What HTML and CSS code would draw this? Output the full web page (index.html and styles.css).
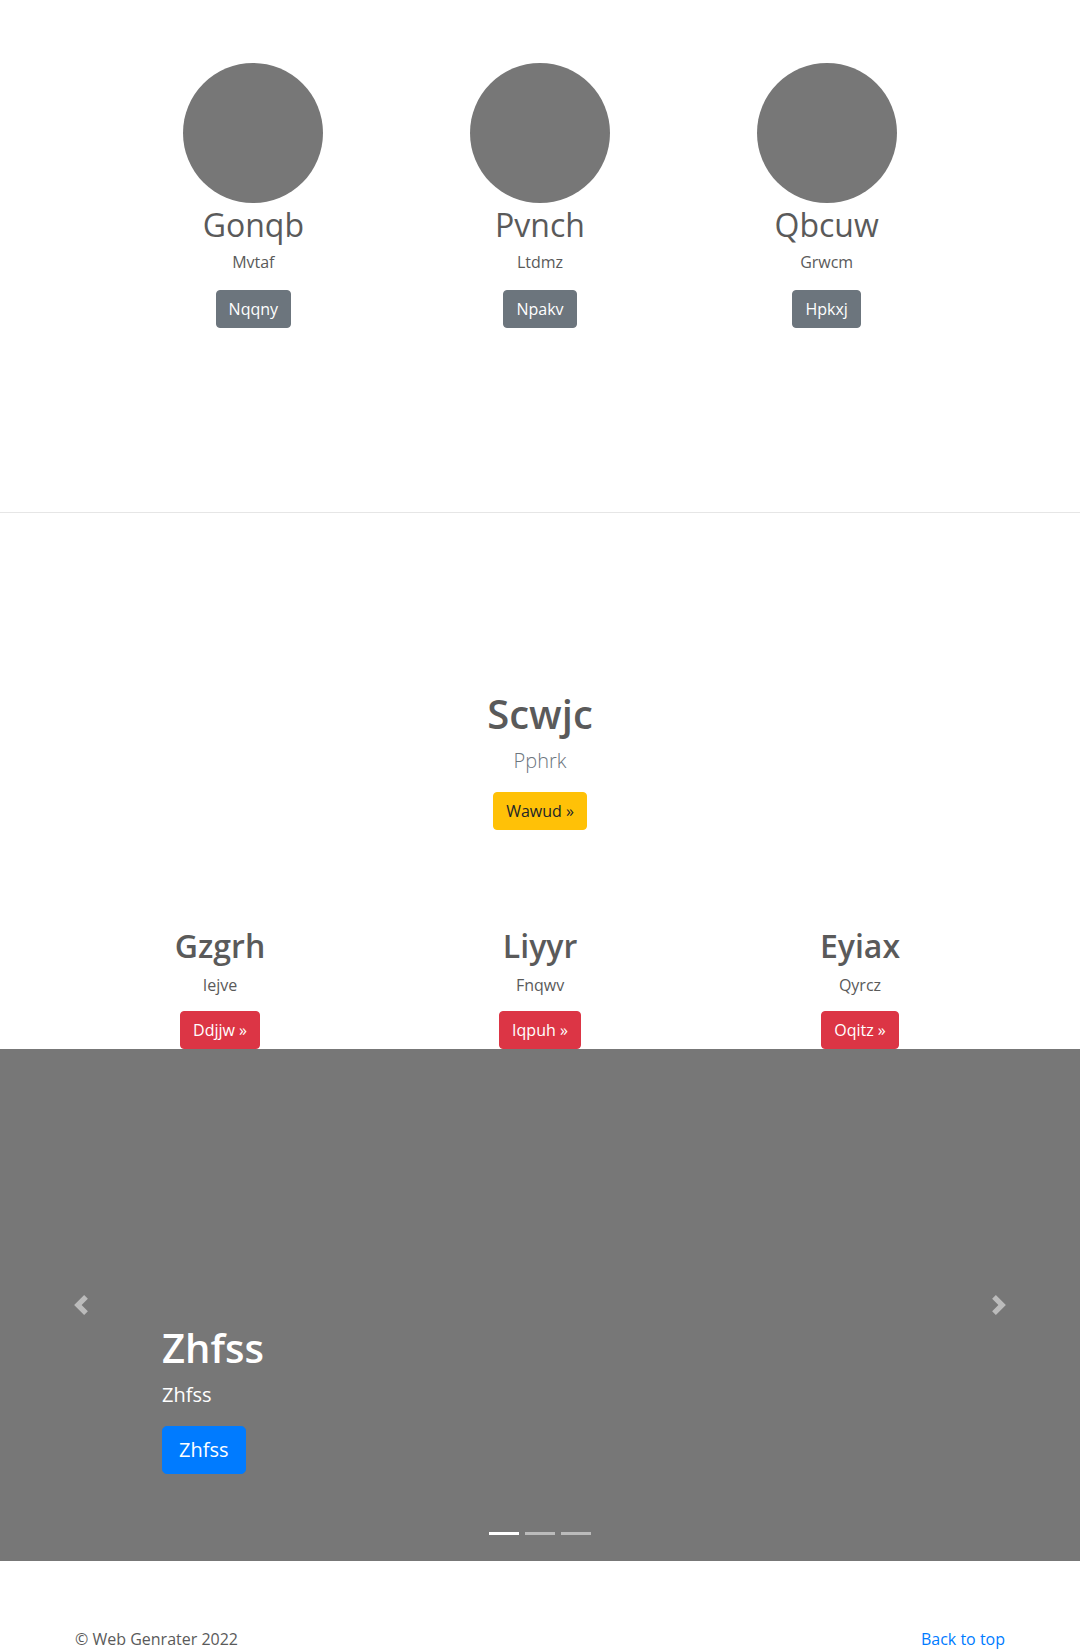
FILE: index.html
```html
<!DOCTYPE html>
<html lang="en">
<head>
<meta charset="utf-8">
<title>Web Genrater</title>
<link rel="stylesheet" href="styles.css">
</head>
<body>
<main>
  <section class="team">
    <div class="team-row">
      <div class="member">
        <svg class="avatar" width="140" height="140" viewBox="0 0 140 140" aria-hidden="true"><circle cx="70" cy="70" r="70" fill="#777"/></svg>
        <h2 class="member-name">Gonqb</h2>
        <p class="member-role">Mvtaf</p>
        <a class="btn btn-secondary" href="#">Nqqny</a>
      </div>
      <div class="member">
        <svg class="avatar" width="140" height="140" viewBox="0 0 140 140" aria-hidden="true"><circle cx="70" cy="70" r="70" fill="#777"/></svg>
        <h2 class="member-name">Pvnch</h2>
        <p class="member-role">Ltdmz</p>
        <a class="btn btn-secondary" href="#">Npakv</a>
      </div>
      <div class="member">
        <svg class="avatar" width="140" height="140" viewBox="0 0 140 140" aria-hidden="true"><circle cx="70" cy="70" r="70" fill="#777"/></svg>
        <h2 class="member-name">Qbcuw</h2>
        <p class="member-role">Grwcm</p>
        <a class="btn btn-secondary" href="#">Hpkxj</a>
      </div>
    </div>
  </section>

  <section class="features">
    <div class="feature-main">
      <h1 class="feature-title">Scwjc</h1>
      <p class="feature-lead">Pphrk</p>
      <a class="btn btn-warning" href="#">Wawud &raquo;</a>
    </div>
    <div class="feature-row">
      <div class="feature">
        <h2 class="feature-name">Gzgrh</h2>
        <p class="feature-text">Iejve</p>
        <a class="btn btn-danger" href="#">Ddjjw &raquo;</a>
      </div>
      <div class="feature">
        <h2 class="feature-name">Liyyr</h2>
        <p class="feature-text">Fnqwv</p>
        <a class="btn btn-danger" href="#">Iqpuh &raquo;</a>
      </div>
      <div class="feature">
        <h2 class="feature-name">Eyiax</h2>
        <p class="feature-text">Qyrcz</p>
        <a class="btn btn-danger" href="#">Oqitz &raquo;</a>
      </div>
    </div>
  </section>

  <section class="carousel">
    <a class="carousel-control control-prev" href="#" aria-label="Previous">
      <svg width="20" height="20" viewBox="0 0 8 8" aria-hidden="true"><path fill="#fff" d="M5.25 0l-4 4 4 4 1.5-1.5-2.5-2.5 2.5-2.5-1.5-1.5z"/></svg>
    </a>
    <div class="carousel-caption">
      <h1 class="caption-title">Zhfss</h1>
      <p class="caption-text">Zhfss</p>
      <a class="btn btn-primary btn-lg" href="#">Zhfss</a>
    </div>
    <a class="carousel-control control-next" href="#" aria-label="Next">
      <svg width="20" height="20" viewBox="0 0 8 8" aria-hidden="true"><path fill="#fff" d="M2.75 0l-1.5 1.5 2.5 2.5-2.5 2.5 1.5 1.5 4-4-4-4z"/></svg>
    </a>
    <ol class="carousel-indicators">
      <li class="active"></li>
      <li></li>
      <li></li>
    </ol>
  </section>
</main>

<footer class="footer">
  <p class="copyright">&copy; Web Genrater 2022</p>
  <p class="back-top"><a href="#">Back to top</a></p>
</footer>
</body>
</html>
```

FILE: styles.css
```css
* {
  box-sizing: border-box;
}

html, body {
  margin: 0;
  padding: 0;
}

body {
  font-family: "Open Sans", "Noto Sans", "Liberation Sans", sans-serif;
  font-size: 16px;
  line-height: 1.5;
  color: #5a5a5a;
  background: #fff;
}

h1, h2, p {
  margin: 0;
}

/* Buttons */
.btn {
  display: inline-block;
  padding: 6px 12px;
  font-size: 16px;
  line-height: 24px;
  border: 1px solid transparent;
  border-radius: 4px;
  text-decoration: none;
  font-weight: 400;
  vertical-align: top;
}

.btn-secondary {
  background: #6c757d;
  border-color: #6c757d;
  color: #fff;
}

.btn-warning {
  background: #ffc107;
  border-color: #ffc107;
  color: #212529;
}

.btn-danger {
  background: #dc3545;
  border-color: #dc3545;
  color: #fff;
}

.btn-primary {
  background: #007bff;
  border-color: #007bff;
  color: #fff;
}

.btn-lg {
  padding: 8px 16px;
  font-size: 20px;
  line-height: 30px;
  border-radius: 4.8px;
}

/* Team section */
.team {
  height: 513px;
  padding-top: 63px;
  border-bottom: 1px solid #e6e6e6;
}

.team-row {
  width: 860px;
  margin: 0 auto;
  display: grid;
  grid-template-columns: repeat(3, 1fr);
}

.member {
  text-align: center;
}

.avatar {
  display: block;
  margin: 0 auto;
}

.member-name {
  margin: 3px 0 6px;
  font-size: 32px;
  line-height: 1.2;
  font-weight: 400;
  color: #5a5a5a;
}

.member-role {
  margin-bottom: 16px;
}

/* Features section */
.features {
  padding-top: 177px;
}

.feature-main {
  text-align: center;
}

.feature-title {
  font-size: 40px;
  line-height: 1.2;
  font-weight: 600;
  margin-bottom: 8px;
  color: #5a5a5a;
}

.feature-lead {
  font-size: 20px;
  line-height: 30px;
  font-weight: 300;
  color: #6c757d;
  margin-bottom: 16px;
}

.feature-row {
  width: 960px;
  margin: 97px auto 0;
  display: grid;
  grid-template-columns: repeat(3, 1fr);
}

.feature {
  text-align: center;
}

.feature-name {
  font-size: 32px;
  line-height: 1.2;
  font-weight: 600;
  margin-bottom: 8px;
  color: #5a5a5a;
}

.feature-text {
  margin-bottom: 14px;
}

/* Carousel */
.carousel {
  height: 512px;
  background: #777;
  display: grid;
  grid-template-columns: 15% 1fr 15%;
  grid-template-rows: 1fr auto;
  margin-bottom: 66px;
}

.carousel-control {
  grid-row: 1 / 3;
  display: flex;
  align-items: center;
  justify-content: center;
  opacity: 0.5;
}

.control-prev {
  grid-column: 1;
}

.control-next {
  grid-column: 3;
}

.carousel-control svg {
  display: block;
}

.carousel-caption {
  grid-column: 2;
  grid-row: 1;
  align-self: end;
  padding-bottom: 48px;
  color: #fff;
  text-align: left;
}

.caption-title {
  font-size: 40px;
  line-height: 1.2;
  font-weight: 600;
  margin-bottom: 8px;
}

.caption-text {
  font-size: 20px;
  line-height: 30px;
  margin-bottom: 16px;
}

.carousel-indicators {
  grid-column: 2;
  grid-row: 2;
  display: flex;
  justify-content: center;
  list-style: none;
  margin: 0 0 16px;
  padding: 0;
}

.carousel-indicators li {
  width: 30px;
  height: 23px;
  margin: 0 3px;
  border-top: 10px solid transparent;
  border-bottom: 10px solid transparent;
  background: #fff;
  background-clip: padding-box;
  opacity: 0.5;
}

.carousel-indicators li.active {
  opacity: 1;
}

/* Footer */
.footer {
  max-width: 960px;
  margin: 0 auto;
  padding: 0 15px;
  display: flex;
  justify-content: space-between;
}

.footer p {
  margin: 0 0 16px;
}

.back-top a {
  color: #007bff;
  text-decoration: none;
}
```
